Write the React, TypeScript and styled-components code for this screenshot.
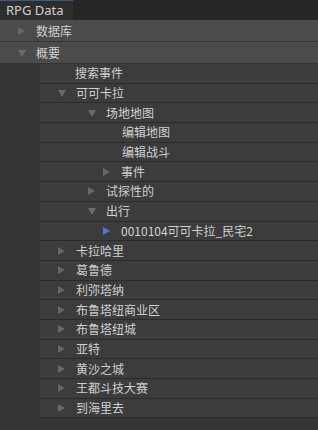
import React from "react";
import styled, { createGlobalStyle } from "styled-components";

const GlobalStyle = createGlobalStyle`
  html, body {
    margin: 0;
    padding: 0;
    background: #353535;
  }
  body {
    font-family: "Noto Sans CJK SC", "Noto Sans", sans-serif;
    font-size: 12px;
    color: #cfcfcf;
  }
`;

type Arrow = "right" | "down" | "active" | "none";

interface Node {
  label: string;
  indent: number;
  arrow: Arrow;
}

// indent = left position of the arrow (or text, for leaves) inside the child list
const children: Node[] = [
  { label: "搜索事件", indent: 35, arrow: "none" },
  { label: "可可卡拉", indent: 18, arrow: "down" },
  { label: "场地地图", indent: 48, arrow: "down" },
  { label: "编辑地图", indent: 82, arrow: "none" },
  { label: "编辑战斗", indent: 82, arrow: "none" },
  { label: "事件", indent: 63, arrow: "right" },
  { label: "试探性的", indent: 48, arrow: "right" },
  { label: "出行", indent: 48, arrow: "down" },
  { label: "0010104可可卡拉_民宅2", indent: 63, arrow: "active" },
  { label: "卡拉哈里", indent: 18, arrow: "right" },
  { label: "葛鲁德", indent: 18, arrow: "right" },
  { label: "利弥塔纳", indent: 18, arrow: "right" },
  { label: "布鲁塔纽商业区", indent: 18, arrow: "right" },
  { label: "布鲁塔纽城", indent: 18, arrow: "right" },
  { label: "亚特", indent: 18, arrow: "right" },
  { label: "黄沙之城", indent: 18, arrow: "right" },
  { label: "王都斗技大赛", indent: 18, arrow: "right" },
  { label: "到海里去", indent: 18, arrow: "right" },
];

const Window = styled.div`
  width: 318px;
  height: 430px;
  background: #353535;
  overflow: hidden;
  display: flex;
  flex-direction: column;
`;

const TabBar = styled.div`
  height: 20px;
  background: #262626;
  display: flex;
  flex-shrink: 0;
`;

const Tab = styled.div`
  width: 73px;
  box-sizing: border-box;
  background: #2d2d2d;
  border-top: 1px solid #3b5a82;
  display: flex;
  align-items: center;
  padding-left: 6px;
  font-family: "Noto Sans", sans-serif;
  font-size: 13px;
  color: #cfcfcf;
  padding-bottom: 1px;
`;

const TopRow = styled.div`
  height: 21px;
  box-sizing: content-box;
  background: #4b4b4b;
  border-bottom: 1px solid #353535;
  display: flex;
  align-items: center;
  padding-left: 18px;
  flex-shrink: 0;
`;

const ChildList = styled.div`
  margin-left: 40px;
  display: flex;
  flex-direction: column;
`;

const Row = styled.div<{ $indent: number }>`
  height: 18.7px;
  background: #3c3c3c;
  border-bottom: 1px solid #2b2b2b;
  display: flex;
  align-items: center;
  padding-left: ${(p) => p.$indent}px;
  flex-shrink: 0;
`;

const ArrowSlot = styled.span`
  width: 18px;
  display: flex;
  align-items: center;
  flex-shrink: 0;
`;

const Tri = styled.span<{ $dir: Arrow }>`
  width: 0;
  height: 0;
  ${(p) =>
    p.$dir === "down"
      ? `border-left: 4.5px solid transparent;
         border-right: 4.5px solid transparent;
         border-top: 7px solid #6b6b6b;
         margin-top: 1px;`
      : `border-top: 4.5px solid transparent;
         border-bottom: 4.5px solid transparent;
         border-left: 7px solid ${p.$dir === "active" ? "#4a7ad8" : "#676767"};`}
`;

const Label = styled.span`
  white-space: nowrap;
  line-height: 1;
`;

function Item({ node }: { node: Node }) {
  return (
    <Row $indent={node.indent}>
      {node.arrow !== "none" && (
        <ArrowSlot>
          <Tri $dir={node.arrow} />
        </ArrowSlot>
      )}
      <Label>{node.label}</Label>
    </Row>
  );
}

export default function App() {
  return (
    <>
      <GlobalStyle />
      <Window>
        <TabBar>
          <Tab>RPG Data</Tab>
        </TabBar>
        <TopRow>
          <ArrowSlot>
            <Tri $dir="right" />
          </ArrowSlot>
          <Label>数据库</Label>
        </TopRow>
        <TopRow>
          <ArrowSlot>
            <Tri $dir="down" />
          </ArrowSlot>
          <Label>概要</Label>
        </TopRow>
        <ChildList>
          {children.map((n) => (
            <Item key={n.label} node={n} />
          ))}
        </ChildList>
      </Window>
    </>
  );
}
